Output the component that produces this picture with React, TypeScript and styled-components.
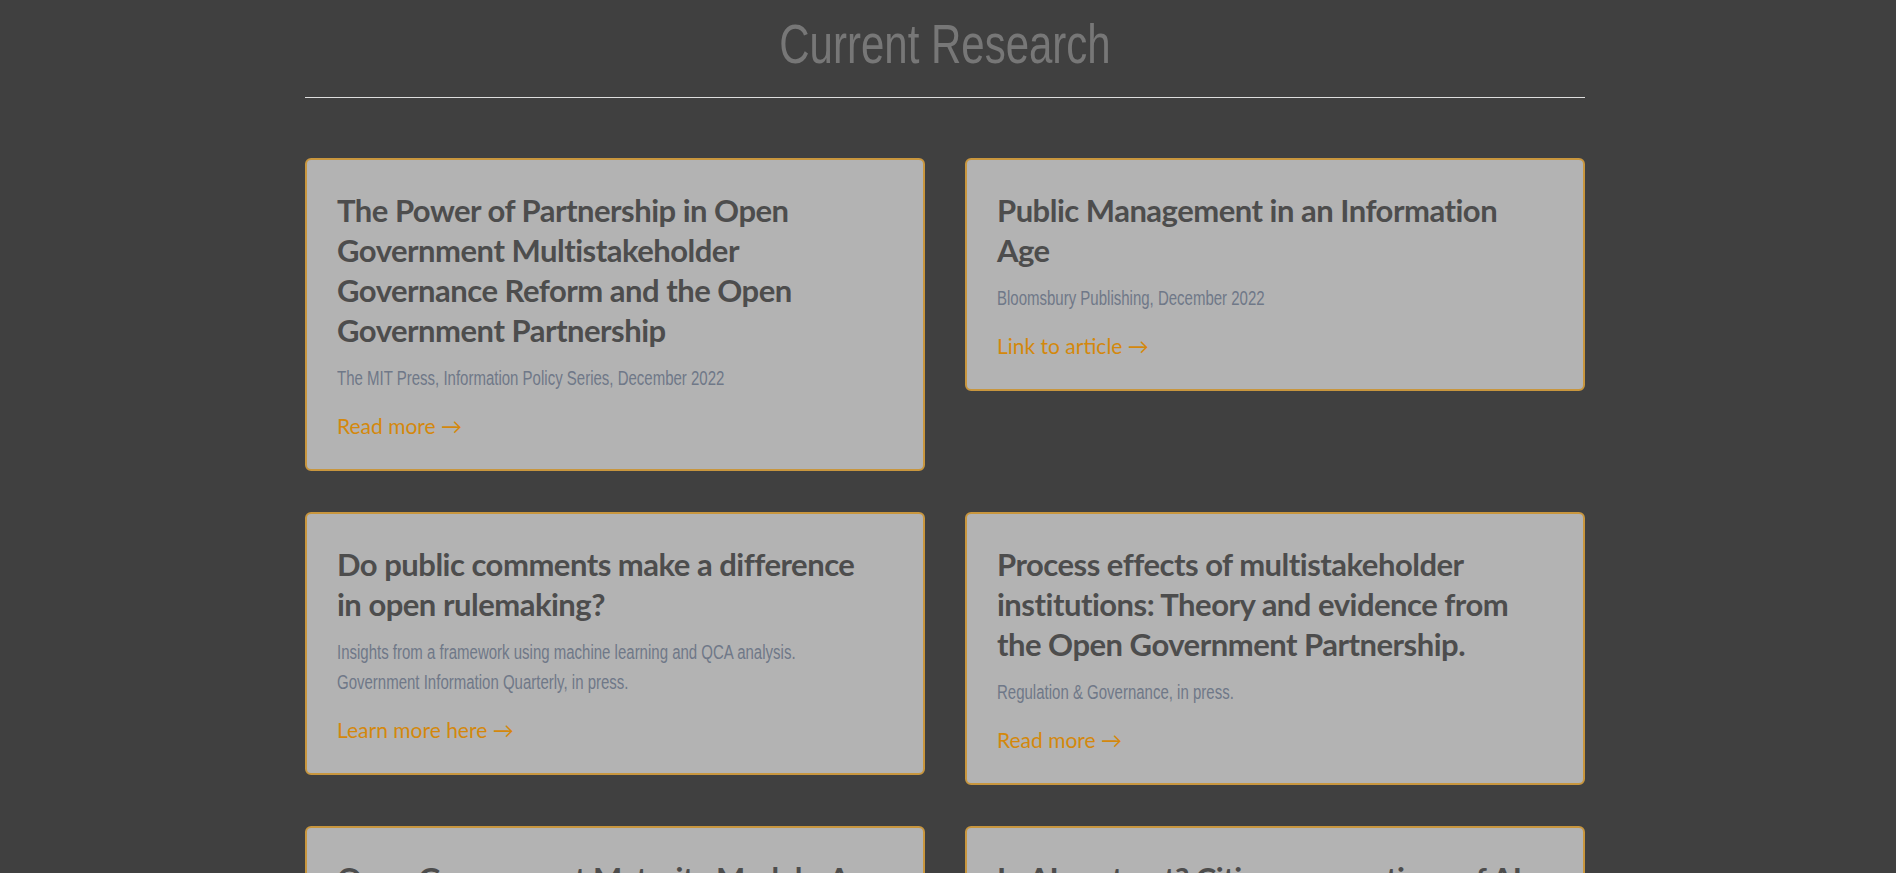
import React from "react";
import styled, { createGlobalStyle } from "styled-components";

/* The reference uses a tall, condensed display face; we condense Liberation Sans to match it. */
const CONDENSE = 0.75;

const GlobalStyle = createGlobalStyle`
  html, body {
    margin: 0;
    padding: 0;
    background: #404040;
  }
  body {
    font-family: Lato, "Open Sans", sans-serif;
  }
`;

const Shell = styled.div`
  padding-right: 6px;
`;

const Page = styled.main`
  width: 1280px;
  margin: 0 auto;
  padding-top: 10px;
`;

const Heading = styled.h2`
  margin: 0;
  text-align: center;
  font-family: "Liberation Sans", Arial, sans-serif;
  font-weight: 400;
  font-size: 56px;
  line-height: 1.2;
  color: #777777;
`;

const Condensed = styled.span`
  display: inline-block;
  transform: scaleX(${CONDENSE});
  transform-origin: 50% 50%;
`;

const Rule = styled.hr`
  margin: 20px 0 0;
  border: 0;
  height: 1px;
  background: #dedede;
`;

const Grid = styled.section`
  display: grid;
  grid-template-columns: 1fr 1fr;
  gap: 41px 40px;
  align-items: start;
  margin-top: 60px;
`;

const Card = styled.article`
  background: #b3b3b3;
  border: 2px solid #c8963e;
  border-radius: 6px;
  padding: 30px 40px 28px 30px;
`;

const Title = styled.h3`
  margin: 0 0 13px;
  font-family: Lato, "Open Sans", sans-serif;
  font-weight: 700;
  font-size: 31px;
  line-height: 40px;
  letter-spacing: -0.5px;
  color: #4d4d4d;
`;

const Meta = styled.div`
  margin: 0 0 18px;
`;

const MetaText = styled.p`
  margin: 0;
  width: calc(100% / ${CONDENSE});
  transform: scaleX(${CONDENSE});
  transform-origin: 0 0;
  font-family: "Liberation Sans", Arial, sans-serif;
  font-size: 20px;
  line-height: 30px;
  color: #6f7888;
`;

const MoreLink = styled.a`
  display: inline-block;
  font-family: Lato, "Open Sans", sans-serif;
  font-size: 21px;
  line-height: 30px;
  color: #d4880c;
  text-decoration: none;
`;

type Item = { title: string; meta: string[]; link: string };

const items: Item[] = [
  {
    title:
      "The Power of Partnership in Open Government Multistakeholder Governance Reform and the Open Government Partnership",
    meta: ["The MIT Press, Information Policy Series, December 2022"],
    link: "Read more",
  },
  {
    title: "Public Management in an Information Age",
    meta: ["Bloomsbury Publishing, December 2022"],
    link: "Link to article",
  },
  {
    title: "Do public comments make a difference in open rulemaking?",
    meta: [
      "Insights from a framework using machine learning and QCA analysis.",
      "Government Information Quarterly, in press.",
    ],
    link: "Learn more here",
  },
  {
    title:
      "Process effects of multistakeholder institutions: Theory and evidence from the Open Government Partnership.",
    meta: ["Regulation & Governance, in press."],
    link: "Read more",
  },
  {
    title: "Open Government Maturity Models: A Global Comparison",
    meta: ["Social Science Computer Review, 2023."],
    link: "Read more",
  },
  {
    title:
      "In AI we trust? Citizen perceptions of AI in government decision making",
    meta: ["Policy & Internet, 2022."],
    link: "Read more",
  },
];

export default function App() {
  return (
    <Shell>
      <GlobalStyle />
      <Page>
        <Heading>
          <Condensed>Current Research</Condensed>
        </Heading>
        <Rule />
        <Grid>
          {items.map((it, i) => (
            <Card key={i}>
              <Title>{it.title}</Title>
              <Meta>
                <MetaText>
                  {it.meta.map((m, j) => (
                    <React.Fragment key={j}>
                      {j > 0 && <br />}
                      {m}
                    </React.Fragment>
                  ))}
                </MetaText>
              </Meta>
              <MoreLink href="#">{it.link} →</MoreLink>
            </Card>
          ))}
        </Grid>
      </Page>
    </Shell>
  );
}
